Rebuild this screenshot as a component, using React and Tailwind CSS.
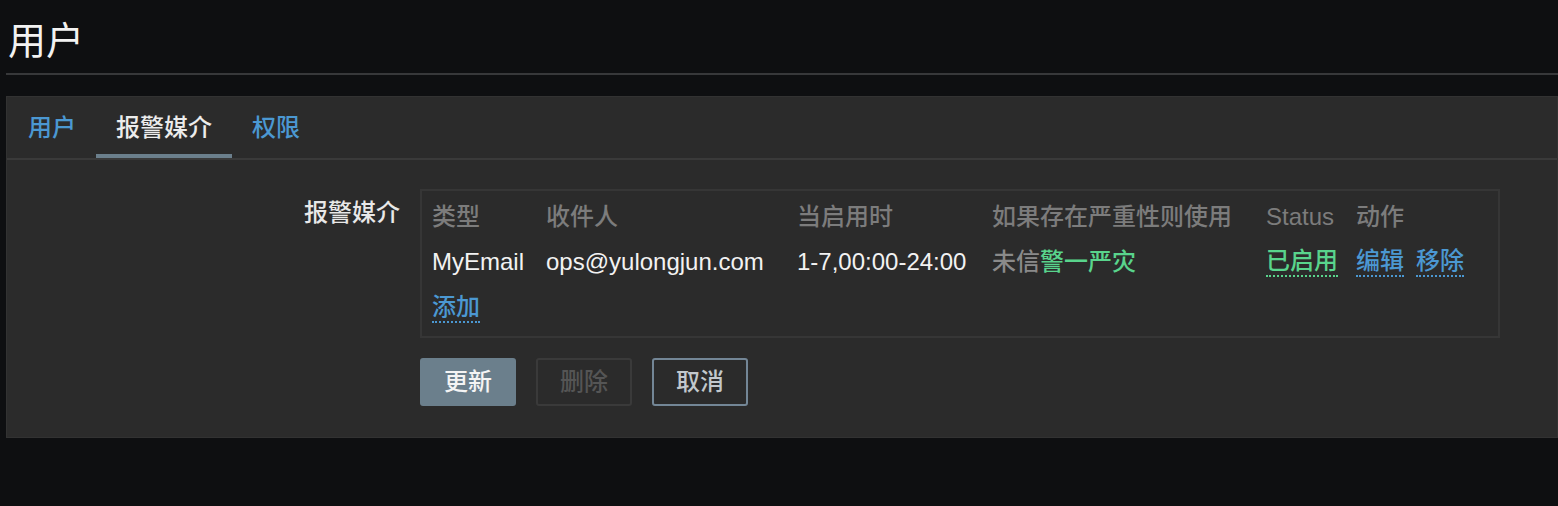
import { useState } from 'react';

const tabs = ['用户', '报警媒介', '权限'];

const cols = 'grid grid-cols-[114px_251px_195px_274px_90px_1fr] items-center h-[45px]';

const App = () => {
  const [active, setActive] = useState(1);

  return (
    <div
      className="min-h-screen w-full bg-[#0e0f11] px-[6px] pt-[10px] text-[24px] font-medium"
      style={{ fontFamily: '"Liberation Sans", "Noto Sans CJK SC", sans-serif' }}
    >
      <h1 className="-mr-[6px] h-[65px] border-b-2 border-[#37383a] pl-[2px] text-[38px] font-normal leading-[62px] text-[#f2f2f2]">用户</h1>

      <div className="mt-[21px] -mr-[6px] border border-[#323232] bg-[#2b2b2b] pb-[31px]">
        <div className="flex h-[63px] border-b-2 border-[#3a3a3a] pl-[1px]">
          {tabs.map((t, i) => (
            <button
              key={t}
              onClick={() => setActive(i)}
              className={
                'px-[20px] pt-[2px] border-b-4 leading-[58px] ' +
                (i === active ? 'border-[#6b7f8c] text-[#ececec]' : 'border-transparent text-[#4b98d2]')
              }
            >
              {t}
            </button>
          ))}
        </div>

        <div className="flex pt-[29px]">
          <div className="w-[393px] shrink-0 pt-[10px] text-right leading-[28px] text-[#e8e8e8]">报警媒介</div>
          <div className="ml-[20px]">
            <div className="w-[1080px] border-2 border-[#363636] pl-[10px] pt-[3px] pb-[5px] leading-[28px]">
              <div className={cols + ' text-[#7c7c7c]'}>
                <span>类型</span>
                <span>收件人</span>
                <span>当启用时</span>
                <span>如果存在严重性则使用</span>
                <span>Status</span>
                <span>动作</span>
              </div>
              <div className={cols + ' text-[#f2f2f2]'}>
                <span>MyEmail</span>
                <span>ops@yulongjun.com</span>
                <span>1-7,00:00-24:00</span>
                <span>
                  <span className="text-[#8a8a8a]">未信</span>
                  <span className="text-[#59d48c]">警一严灾</span>
                </span>
                <span>
                  <a className="inline-block border-b-2 border-dotted border-[#59d48c] text-[#59d48c]">已启用</a>
                </span>
                <span className="flex gap-[12px]">
                  <a className="inline-block border-b-2 border-dotted border-[#4b98d2] text-[#4b98d2]">编辑</a>
                  <a className="inline-block border-b-2 border-dotted border-[#4b98d2] text-[#4b98d2]">移除</a>
                </span>
              </div>
              <div className="flex h-[47px] items-center">
                <a className="inline-block border-b-2 border-dotted border-[#4b98d2] text-[#4b98d2]">添加</a>
              </div>
            </div>

            <div className="mt-[20px] flex gap-[20px]">
              <button className="h-[48px] w-[96px] rounded-[3px] bg-[#6b7f8c] text-[#f4f4f4]">更新</button>
              <button className="h-[48px] w-[96px] rounded-[3px] border-2 border-[#3a3a3a] text-[#555555]">删除</button>
              <button className="h-[48px] w-[96px] rounded-[3px] border-2 border-[#738696] text-[#c2c8cc]">取消</button>
            </div>
          </div>
        </div>
      </div>
    </div>
  );
};

export default App;
